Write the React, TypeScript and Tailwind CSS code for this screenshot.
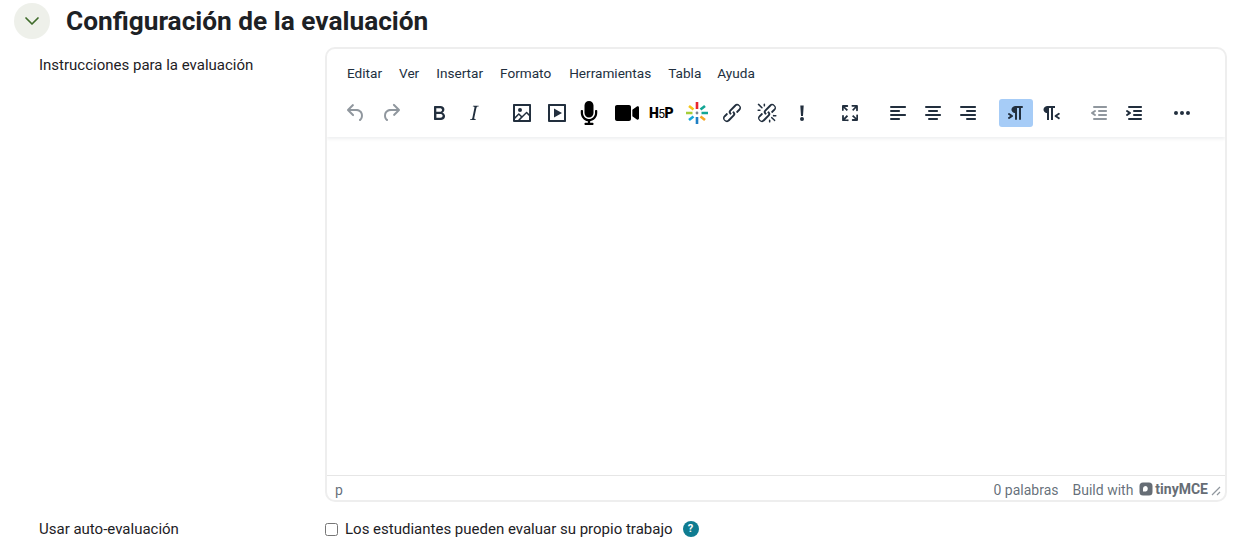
import { FaMicrophone, FaVideo } from 'react-icons/fa';

const menus = [
  { label: 'Editar', cls: '' },
  { label: 'Ver', cls: 'ml-[17px]' },
  { label: 'Insertar', cls: 'ml-[17px]' },
  { label: 'Formato', cls: 'ml-[17px]' },
  { label: 'Herramientas', cls: 'ml-[18px]' },
  { label: 'Tabla', cls: 'ml-[17px]' },
  { label: 'Ayuda', cls: 'ml-[16px]' },
];

function Icon({ d, disabled }: { d: string; disabled?: boolean }) {
  return (
    <svg width="24" height="24" viewBox="0 0 24 24" className={disabled ? 'fill-[#222f3e80]' : 'fill-[#222f3e]'}>
      <path d={d} />
    </svg>
  );
}

function Btn({ className = '', active, children }: { className?: string; active?: boolean; children: React.ReactNode }) {
  return (
    <div className={`w-[34px] h-[28px] shrink-0 rounded-[3px] flex items-center justify-center ${active ? 'bg-[#a6ccf7]' : ''} ${className}`}>
      {children}
    </div>
  );
}

const paths = {
  undo: 'M6.4 8H12c3.7 0 6.2 2 6.8 5.1.6 2.7-.4 5.6-2.3 6.8a1 1 0 01-1-1.8c1.1-.6 1.8-2.7 1.4-4.6-.5-2.1-2.1-3.5-4.9-3.5H6.4l3.3 3.3a1 1 0 11-1.4 1.4l-5-5a1 1 0 010-1.4l5-5a1 1 0 011.4 1.4L6.4 8z',
  redo: 'M17.6 10H12c-2.8 0-4.4 1.4-4.9 3.5-.4 2 .3 4 1.4 4.6a1 1 0 11-1 1.8c-2-1.2-2.9-4.1-2.3-6.8.6-3 3-5.1 6.8-5.1h5.6l-3.3-3.3a1 1 0 111.4-1.4l5 5a1 1 0 010 1.4l-5 5a1 1 0 01-1.4-1.4l3.3-3.3z',
  bold: 'M7.8 19c-.3 0-.5 0-.6-.2l-.2-.5V5.7c0-.2 0-.4.2-.5l.6-.2h5c1.5 0 2.7.3 3.5 1 .7.6 1.1 1.4 1.1 2.5a3 3 0 01-.6 1.9c-.4.6-1 1-1.6 1.2.4.1.9.3 1.3.6s.8.7 1 1.2c.4.4.5 1 .5 1.6 0 1.3-.4 2.3-1.3 3-.8.7-2.1 1-3.8 1H7.8zm5-8.3c.6 0 1.2-.1 1.6-.5.4-.3.6-.7.6-1.3 0-1.1-.8-1.7-2.3-1.7H9.3v3.5h3.4zm.5 6c.7 0 1.3-.1 1.7-.4.4-.4.6-.9.6-1.5s-.2-1-.7-1.4c-.4-.3-1-.4-2-.4H9.4v3.8h4z',
  italic: 'M16.7 4.7l-.1.9h-.3c-.6 0-1 0-1.4.3-.3.3-.4.6-.5 1.1l-2.1 9.8v.6c0 .5.4.8 1.4.8h.2l-.2.8H8l.2-.8h.2c1.1 0 1.8-.5 2-1.5l2-9.8.1-.5c0-.6-.4-.8-1.4-.8h-.3l.2-.9h5.8z',
  image: 'M5 15.7l3.3-3.2c.3-.3.7-.3 1 0L12 15l4.1-4c.3-.4.8-.4 1 0l2 1.9V5H5v10.7zM5 18V19h3l2.8-2.9-2-2L5 17.9zm14-3l-2.5-2.4-6.4 6.5H19v-4zM4 3h16c.6 0 1 .4 1 1v16c0 .6-.4 1-1 1H4a1 1 0 01-1-1V4c0-.6.4-1 1-1zm6 8a2 2 0 100-4 2 2 0 000 4z',
  media: 'M4 3h16c.6 0 1 .4 1 1v16c0 .6-.4 1-1 1H4a1 1 0 01-1-1V4c0-.6.4-1 1-1zm1 2v14h14V5H5zm4 2.5l8 4.5-8 4.5v-9z',
  link: 'M6.2 12.3a1 1 0 011.4 1.4l-2 2a2 2 0 102.6 2.8l4.8-4.8a1 1 0 000-1.4 1 1 0 111.4-1.3 2.9 2.9 0 010 4L9.6 20a3.9 3.9 0 01-5.5-5.5l2-2zm11.6-.6a1 1 0 01-1.4-1.4l2-2a2 2 0 10-2.6-2.8L11 10.3a1 1 0 000 1.4A1 1 0 119.6 13a2.9 2.9 0 010-4L14.4 4a3.9 3.9 0 015.5 5.5l-2 2z',
  unlink: 'M6.2 12.3a1 1 0 011.4 1.4l-2.1 2a2 2 0 102.7 2.8l4.8-4.8a1 1 0 000-1.4 1 1 0 111.4-1.3 2.9 2.9 0 010 4L9.6 20a3.9 3.9 0 01-5.5-5.5l2-2zm11.6-.6a1 1 0 01-1.4-1.4l2.1-2a2 2 0 10-2.7-2.8L11 10.3a1 1 0 000 1.4A1 1 0 119.6 13a2.9 2.9 0 010-4L14.4 4a3.9 3.9 0 015.5 5.5l-2 2zM7.6 6.3a.8.8 0 01-1 1.1L3.3 4.2a.8.8 0 111-1.1l3.2 3.2zM5.1 8.6a.8.8 0 010 1.5H3a.8.8 0 010-1.5H5zm5-3.5a.8.8 0 01-1.5 0V3a.8.8 0 011.5 0v2zm6 11.8a.8.8 0 011-1l3.2 3.2a.8.8 0 01-1 1L16 17zm-2.2 2a.8.8 0 011.5 0V21a.8.8 0 01-1.5 0V19zm5-3.5a.8.8 0 110-1.5H21a.8.8 0 010 1.5H19z',
  bang: 'M10.3 4.5h3.4l-.7 10.5h-2l-.7-10.5zM12 16a2 2 0 110 4 2 2 0 010-4z',
  full: 'M15.3 10l-1.2-1.3 2.9-3h-2.3a.9.9 0 110-1.7H19c.5 0 .9.4.9.9v4.4a.9.9 0 11-1.8 0V7l-2.9 3zm0 4l3 3v-2.3a.9.9 0 111.7 0V19c0 .5-.4.9-.9.9h-4.4a.9.9 0 110-1.8H17l-3-2.9 1.3-1.2zM10 15.4l-2.9 3h2.3a.9.9 0 110 1.7H5a.9.9 0 01-.9-.9v-4.4a.9.9 0 111.8 0V17l2.9-3 1.2 1.3zM8.7 10L5.7 7v2.3a.9.9 0 01-1.7 0V5c0-.5.4-.9.9-.9h4.4a.9.9 0 010 1.8H7l3 2.9-1.3 1.2z',
  left: 'M5 5h14c.6 0 1 .4 1 1s-.4 1-1 1H5a1 1 0 110-2zm0 4h8c.6 0 1 .4 1 1s-.4 1-1 1H5a1 1 0 110-2zm0 8h8c.6 0 1 .4 1 1s-.4 1-1 1H5a1 1 0 010-2zm0-4h14c.6 0 1 .4 1 1s-.4 1-1 1H5a1 1 0 010-2z',
  center: 'M5 5h14c.6 0 1 .4 1 1s-.4 1-1 1H5a1 1 0 110-2zm3 4h8c.6 0 1 .4 1 1s-.4 1-1 1H8a1 1 0 110-2zm0 8h8c.6 0 1 .4 1 1s-.4 1-1 1H8a1 1 0 010-2zm-3-4h14c.6 0 1 .4 1 1s-.4 1-1 1H5a1 1 0 010-2z',
  right: 'M5 5h14c.6 0 1 .4 1 1s-.4 1-1 1H5a1 1 0 110-2zm6 4h8c.6 0 1 .4 1 1s-.4 1-1 1h-8a1 1 0 010-2zm0 8h8c.6 0 1 .4 1 1s-.4 1-1 1h-8a1 1 0 010-2zm-6-4h14c.6 0 1 .4 1 1s-.4 1-1 1H5a1 1 0 010-2z',
  ltr: 'M11 5h7a1 1 0 010 2h-1v11a1 1 0 01-2 0V7h-2v11a1 1 0 01-2 0v-6c-.5 0-1 0-1.4-.3A3.4 3.4 0 017.8 10a3.3 3.3 0 010-2.8 3.4 3.4 0 011.8-1.8L11 5zM4.4 16.2L6.2 15l-1.8-1.2a1 1 0 011.2-1.6l3 2a1 1 0 010 1.6l-3 2a1 1 0 11-1.2-1.6z',
  rtl: 'M8 5h8v2h-2v12h-2V7h-2v12H8v-7c-.5 0-1 0-1.4-.3A3.4 3.4 0 014.8 10a3.3 3.3 0 010-2.8 3.4 3.4 0 011.8-1.8L8 5zm12 11.2a1 1 0 11-1 1.6l-3-2a1 1 0 010-1.6l3-2a1 1 0 111 1.6L18.2 15l1.8 1.2z',
  outdent: 'M7 5h12c.6 0 1 .4 1 1s-.4 1-1 1H7a1 1 0 110-2zm5 4h7c.6 0 1 .4 1 1s-.4 1-1 1h-7a1 1 0 010-2zm0 4h7c.6 0 1 .4 1 1s-.4 1-1 1h-7a1 1 0 010-2zm-5 4h12a1 1 0 010 2H7a1 1 0 010-2zm1.6-3.8a1 1 0 01-1.2 1.6l-3-2a1 1 0 010-1.6l3-2a1 1 0 011.2 1.6L6.8 12l1.8 1.2z',
  indent: 'M7 5h12c.6 0 1 .4 1 1s-.4 1-1 1H7a1 1 0 110-2zm5 4h7c.6 0 1 .4 1 1s-.4 1-1 1h-7a1 1 0 010-2zm0 4h7c.6 0 1 .4 1 1s-.4 1-1 1h-7a1 1 0 010-2zm-5 4h12a1 1 0 010 2H7a1 1 0 010-2zm-2.6-3.8L6.2 12l-1.8-1.2a1 1 0 011.2-1.6l3 2a1 1 0 010 1.6l-3 2a1 1 0 11-1.2-1.6z',
  more: 'M6 10a2 2 0 00-2 2c0 1.1.9 2 2 2a2 2 0 002-2 2 2 0 00-2-2zm12 0a2 2 0 00-2 2c0 1.1.9 2 2 2a2 2 0 002-2 2 2 0 00-2-2zm-6 0a2 2 0 00-2 2c0 1.1.9 2 2 2a2 2 0 002-2 2 2 0 00-2-2z',
};

// colored burst used by the media plugin button
const burst = [
  { x1: 12, y1: 1, x2: 12, y2: 8, c: '#e8262d' },
  { x1: 20, y1: 5, x2: 15.5, y2: 8.5, c: '#12a594' },
  { x1: 23, y1: 12, x2: 16.5, y2: 12, c: '#12a594' },
  { x1: 20, y1: 19, x2: 15.5, y2: 15.5, c: '#f5a623' },
  { x1: 12, y1: 23, x2: 12, y2: 16, c: '#1e7fc4' },
  { x1: 4, y1: 19, x2: 8.5, y2: 15.5, c: '#14a8d8' },
  { x1: 1, y1: 12, x2: 7.5, y2: 12, c: '#a5cd39' },
  { x1: 4, y1: 5, x2: 8.5, y2: 8.5, c: '#f5c518' },
];

export default function App() {
  return (
    <div className="w-[1248px] h-[545px] overflow-hidden bg-white font-['Roboto',sans-serif] text-[#1d2125]">
      {/* Section heading */}
      <div className="flex items-center pl-[14px] pt-[3px]">
        <div className="w-[36px] h-[36px] rounded-full bg-[#eef0ea] flex items-center justify-center">
          <svg width="16" height="16" viewBox="0 0 16 16" fill="none" stroke="#3f6b2a" strokeWidth="1.7" strokeLinecap="round" strokeLinejoin="round">
            <path d="M2 5l6 6 6-6" />
          </svg>
        </div>
        <h2 className="ml-[16px] text-[26.25px] leading-[36px] font-bold">Configuración de la evaluación</h2>
      </div>

      {/* Instructions row */}
      <div className="flex mt-[8px]">
        <div className="w-[325px] shrink-0 pl-[39px] pt-[8px] text-[15px] leading-[20px]">Instrucciones para la evaluación</div>
        <div className="w-[902px] h-[455px] border-2 border-[#eeeeee] rounded-[10px] flex flex-col overflow-hidden">
          <div className="shadow-[0_2px_3px_rgba(34,47,62,0.08)] h-[88px] shrink-0 relative">
            <div className="flex pl-[20px] pt-[14px] text-[13.6px] leading-[20px] text-[#222f3e]">
              {menus.map((m) => (
                <span key={m.label} className={m.cls}>{m.label}</span>
              ))}
            </div>
            <div className="flex items-center pl-[12px] mt-[16px]">
              <Btn><Icon d={paths.undo} disabled /></Btn>
              <Btn className="ml-px"><Icon d={paths.redo} disabled /></Btn>
              <Btn className="ml-[14px]"><Icon d={paths.bold} /></Btn>
              <Btn className="ml-px"><Icon d={paths.italic} /></Btn>
              <Btn className="ml-[14px]"><Icon d={paths.image} /></Btn>
              <Btn className="ml-px"><Icon d={paths.media} /></Btn>
              <Btn className="-ml-[2px]"><FaMicrophone size={24} className="text-black" /></Btn>
              <Btn className="ml-[4px]"><FaVideo size={24} className="text-black" /></Btn>
              <Btn>
                <span className="text-[14px] leading-none font-black text-black tracking-[-0.5px]">H<span className="font-normal text-[12px]">5</span>P</span>
              </Btn>
              <Btn className="ml-[2px]">
                <svg width="24" height="24" viewBox="0 0 24 24" fill="none" strokeWidth="2.6">
                  {burst.map((b) => (
                    <line key={`${b.x1}-${b.y1}`} x1={b.x1} y1={b.y1} x2={b.x2} y2={b.y2} stroke={b.c} />
                  ))}
                  <circle cx="12" cy="12" r="1.4" fill="#7a8590" />
                </svg>
              </Btn>
              <Btn className="ml-px"><Icon d={paths.link} /></Btn>
              <Btn className="ml-px"><Icon d={paths.unlink} /></Btn>
              <Btn className="ml-px"><Icon d={paths.bang} /></Btn>
              <Btn className="ml-[14px]"><Icon d={paths.full} /></Btn>
              <Btn className="ml-[14px]"><Icon d={paths.left} /></Btn>
              <Btn className="ml-px"><Icon d={paths.center} /></Btn>
              <Btn className="ml-px"><Icon d={paths.right} /></Btn>
              <Btn className="ml-[14px]" active><Icon d={paths.ltr} /></Btn>
              <Btn className="ml-px"><Icon d={paths.rtl} /></Btn>
              <Btn className="ml-[14px]"><Icon d={paths.outdent} disabled /></Btn>
              <Btn className="ml-px"><Icon d={paths.indent} /></Btn>
              <Btn className="ml-[14px]"><Icon d={paths.more} /></Btn>
            </div>
          </div>
          <div className="flex-1" />
          <div className="h-[25px] shrink-0 border-t border-[#e6e6e6] flex items-center pt-[4px] pl-[8px] pr-[3px] text-[14px] text-[#222f3eb3]">
            <span>p</span>
            <span className="ml-auto">0 palabras</span>
            <span className="ml-[14px]">Build with</span>
            <svg width="14" height="14" viewBox="0 0 14 14" className="ml-[6px] -mt-[2px] fill-[#666d75]">
              <path fillRule="evenodd" d="M4 0.5h6a3.5 3.5 0 013.5 3.5v6a3.5 3.5 0 01-3.5 3.5H4A3.5 3.5 0 01.5 10V4A3.5 3.5 0 014 .5zM7 4a3 3 0 00-3 3v2.5h3a3 3 0 000-5.5z" />
            </svg>
            <span className="ml-[2px] -mt-[2px] font-bold text-[14px] text-[#666d75]">tinyMCE</span>
            <svg width="12" height="12" viewBox="0 0 12 12" className="ml-[2px] mt-[2px] stroke-[#222f3e80]" fill="none" strokeWidth="1.2">
              <path d="M2 10l8-8M7 10l3-3" />
            </svg>
          </div>
        </div>
      </div>

      {/* Self assessment row */}
      <div className="flex items-center mt-[17px] text-[15px] leading-[20px]">
        <div className="w-[325px] shrink-0 pl-[39px]">Usar auto-evaluación</div>
        <input type="checkbox" readOnly className="w-[13px] h-[13px] m-0" />
        <span className="ml-[7px]">Los estudiantes pueden evaluar su propio trabajo</span>
        <span className="ml-[10px] w-[16px] h-[16px] rounded-full bg-[#0f7c91] text-white text-[11px] font-bold flex items-center justify-center">?</span>
      </div>
    </div>
  );
}
